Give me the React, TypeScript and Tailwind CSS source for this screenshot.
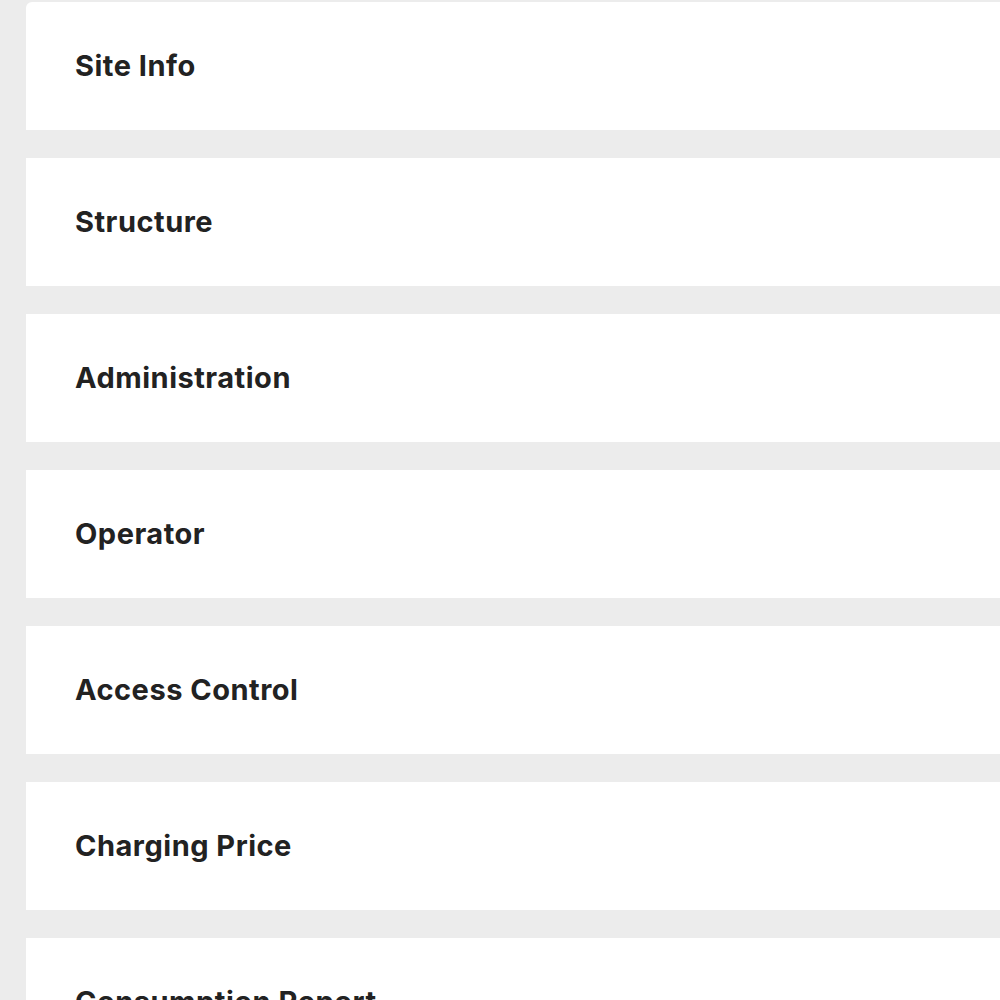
const sections = [
  "Site Info",
  "Structure",
  "Administration",
  "Operator",
  "Access Control",
  "Charging Price",
  "Consumption Report",
];

export default function App() {
  return (
    <div className="h-[1000px] overflow-hidden bg-[#ececec] pl-[26px] pt-[2px] font-['Inter','Liberation_Sans',sans-serif]">
      <div className="flex flex-col gap-[28px]">
        {sections.map((title, i) => (
          <div
            key={title}
            className={`flex h-[128px] shrink-0 items-center bg-white pl-[49px] ${i === 0 ? "rounded-tl-[6px]" : ""}`}
          >
            <h2 className="text-[29px] font-bold tracking-[0.5px] text-[#222222]">{title}</h2>
          </div>
        ))}
      </div>
    </div>
  );
}
